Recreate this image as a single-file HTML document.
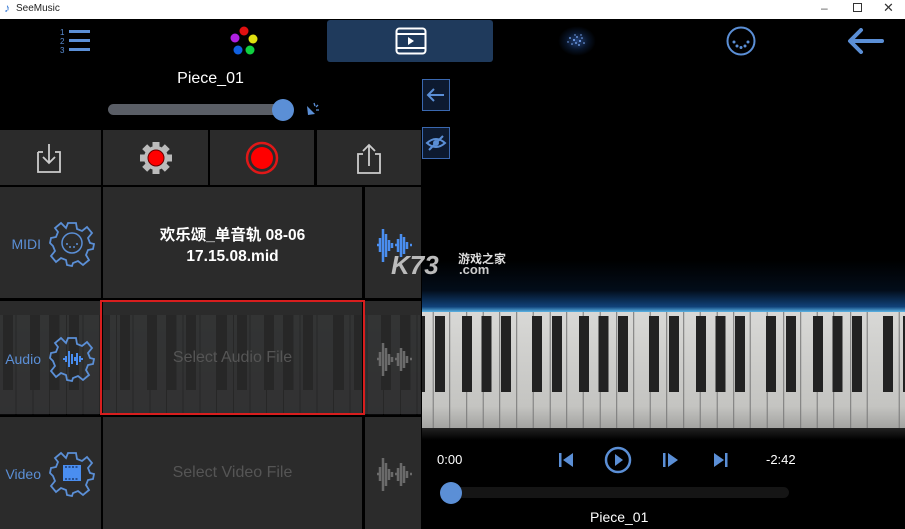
<!DOCTYPE html>
<html><head><meta charset="utf-8">
<style>
*{margin:0;padding:0;box-sizing:border-box}
body{width:905px;height:529px;overflow:hidden;background:#000;font-family:"Liberation Sans","Noto Sans CJK SC",sans-serif;position:relative}
.abs{position:absolute}
.cell{position:absolute;background:#2b2b2b}
.t{color:#fff;position:absolute;text-align:center}
.lbl{color:#5b8fd6;font-size:14px;position:absolute;text-align:right}
.keys{position:absolute;left:422px;top:312px;width:483px;height:118px;
background:
linear-gradient(to right,#222 0,#222 10px,transparent 10px,transparent 19.5px,#222 19.5px,#222 29.5px,transparent 29.5px,transparent 39px,#222 39px,#222 49px,transparent 49px,transparent 70px,#222 70px,#222 80px,transparent 80px,transparent 90px,#222 90px,#222 100px,transparent 100px) 40px 4px/117px 76px repeat-x,
repeating-linear-gradient(to right,transparent 0,transparent 15.7px,#777 15.7px,#777 16.7px) -21.8px 0/100% 100%,
linear-gradient(#d8d8d6,#c4c4c1 80%,#a0a09e);}
.fkeys{position:absolute;left:0;top:315px;width:421px;height:100px;opacity:.07;
background:
linear-gradient(to right,#000 0,#000 10px,transparent 10px,transparent 19.5px,#000 19.5px,#000 29.5px,transparent 29.5px,transparent 39px,#000 39px,#000 49px,transparent 49px,transparent 70px,#000 70px,#000 80px,transparent 80px,transparent 90px,#000 90px,#000 100px,transparent 100px) 30px 0/117px 75px repeat-x,
repeating-linear-gradient(to right,transparent 0,transparent 15.7px,#000 15.7px,#000 16.7px),
linear-gradient(#9aa,#889);}
</style></head><body>
<div class="abs" style="left:0;top:0;width:905px;height:19px;background:#fff"></div>
<div class="abs" style="left:4px;top:1px;font-size:12px;color:#3a7bd5">♪</div>
<div class="abs" style="left:16px;top:3px;font-size:10px;color:#222">SeeMusic</div>
<div class="abs" style="left:821px;top:1px;font-size:12px;color:#555">–</div>
<div class="abs" style="left:853px;top:3px;width:9px;height:9px;border:1px solid #333"></div>
<div class="abs" style="left:883px;top:0px;font-size:13px;color:#333">✕</div>

<div class="abs" style="left:327px;top:20px;width:166px;height:42px;background:#1f3a5c;border-radius:3px"></div>
<svg class="abs" style="left:60px;top:27px" width="32" height="28">
<text x="0" y="8" fill="#5b8fd6" font-size="8" font-family="Liberation Sans">1</text>
<text x="0" y="17" fill="#5b8fd6" font-size="8" font-family="Liberation Sans">2</text>
<text x="0" y="26" fill="#5b8fd6" font-size="8" font-family="Liberation Sans">3</text>
<rect x="9" y="3" width="21" height="3" fill="#5b8fd6"/><rect x="9" y="12" width="21" height="3" fill="#5b8fd6"/><rect x="9" y="21" width="21" height="3" fill="#5b8fd6"/></svg>
<svg class="abs" style="left:228px;top:26px" width="32" height="30">
<circle cx="16" cy="5" r="4.5" fill="#e01010"/><circle cx="7" cy="12" r="4.5" fill="#b020e0"/><circle cx="25" cy="13" r="4.5" fill="#e0e010"/><circle cx="10" cy="24" r="4.5" fill="#1060e0"/><circle cx="22" cy="24" r="4.5" fill="#10d040"/></svg>
<svg class="abs" style="left:395px;top:27px" width="32" height="28"><rect x="1.5" y="1.5" width="29" height="25" rx="3" fill="none" stroke="#fff" stroke-width="2"/><line x1="1" y1="7" x2="31" y2="7" stroke="#fff" stroke-width="2"/><line x1="1" y1="21" x2="31" y2="21" stroke="#fff" stroke-width="2"/><path d="M13 10 L19 14 L13 18Z" fill="#fff"/></svg>
<div class="abs" style="left:558px;top:26px;width:38px;height:30px;border-radius:50%;background:radial-gradient(rgba(60,110,200,.6) 0,rgba(20,50,100,.4) 40%,transparent 70%)"></div>
<svg class="abs" style="left:562px;top:30px" width="30" height="22" fill="#7fb0ff"><circle cx="8" cy="8" r=".9"/><circle cx="12" cy="10" r="1"/><circle cx="15" cy="7" r=".9"/><circle cx="18" cy="11" r="1"/><circle cx="14" cy="13" r=".9"/><circle cx="10" cy="14" r=".8"/><circle cx="20" cy="8" r=".8"/><circle cx="17" cy="15" r=".9"/><circle cx="22" cy="13" r=".8"/><circle cx="6" cy="12" r=".7"/><circle cx="13" cy="5" r=".7"/><circle cx="19" cy="5" r=".7"/></svg>
<svg class="abs" style="left:726px;top:26px" width="30" height="30"><circle cx="15" cy="15" r="13.5" fill="none" stroke="#5b8fd6" stroke-width="2"/><circle cx="8" cy="16" r="1.5" fill="#5b8fd6"/><circle cx="11" cy="20" r="1.5" fill="#5b8fd6"/><circle cx="15" cy="21.5" r="1.5" fill="#5b8fd6"/><circle cx="19" cy="20" r="1.5" fill="#5b8fd6"/><circle cx="22" cy="16" r="1.5" fill="#5b8fd6"/></svg>
<svg class="abs" style="left:846px;top:28px" width="38" height="26"><path d="M36 13 H5 M15 2 L4 13 L15 24" fill="none" stroke="#5b8fd6" stroke-width="4" stroke-linecap="round" stroke-linejoin="round"/></svg>

<div class="t" style="left:0;width:421px;top:70px;font-size:16px">Piece_01</div>
<div class="abs" style="left:108px;top:104px;width:185px;height:11px;border-radius:6px;background:#5a5e66"></div>
<div class="abs" style="left:272px;top:99px;width:22px;height:22px;border-radius:50%;background:#5b8fd6"></div>
<svg class="abs" style="left:304px;top:100px" width="18" height="18"><path d="M3 6 L11 14 L4 15 Z" fill="#5b8fd6"/><path d="M10 3 l1 3 M14 5 l-2 2 M15 10 l-3 0" stroke="#5b8fd6" stroke-width="1.3"/></svg>

<div class="cell" style="left:0;top:130px;width:101px;height:55px"></div>
<div class="cell" style="left:103px;top:130px;width:105px;height:55px"></div>
<div class="cell" style="left:210px;top:130px;width:104px;height:55px"></div>
<div class="cell" style="left:317px;top:130px;width:104px;height:55px"></div>
<svg class="abs" style="left:36px;top:142px" width="26" height="32"><path d="M2 10 H7 M19 10 H24 V30 H2 V10" fill="none" stroke="#ccc" stroke-width="1.8"/><path d="M13 2 V21 M7 15 L13 21 L19 15" fill="none" stroke="#ccc" stroke-width="1.8"/></svg>
<svg class="abs" style="left:139px;top:141px" width="34" height="34"><g fill="#bbb" transform="translate(17 17)"><circle r="12"/><rect x="-3.5" y="-16" width="7" height="32"/><rect x="-3.5" y="-16" width="7" height="32" transform="rotate(45)"/><rect x="-3.5" y="-16" width="7" height="32" transform="rotate(90)"/><rect x="-3.5" y="-16" width="7" height="32" transform="rotate(135)"/></g><circle cx="17" cy="17" r="8" fill="#f00" stroke="#600" stroke-width="1"/></svg>
<svg class="abs" style="left:245px;top:141px" width="34" height="34"><circle cx="17" cy="17" r="15" fill="none" stroke="#e01818" stroke-width="2.5"/><circle cx="17" cy="17" r="11" fill="#f00"/></svg>
<svg class="abs" style="left:356px;top:142px" width="26" height="32"><path d="M7 12 H2 V31 H24 V12 H19" fill="none" stroke="#ccc" stroke-width="1.8"/><path d="M13 24 V3 M7 9 L13 3 L19 9" fill="none" stroke="#ccc" stroke-width="1.8"/></svg>

<div class="cell" style="left:0;top:187px;width:101px;height:111px"></div>
<div class="cell" style="left:103px;top:187px;width:259px;height:111px"></div>
<div class="cell" style="left:365px;top:187px;width:56px;height:111px"></div>
<div class="cell" style="left:0;top:301px;width:101px;height:113px"></div>
<div class="cell" style="left:103px;top:301px;width:259px;height:113px"></div>
<div class="cell" style="left:365px;top:301px;width:56px;height:113px"></div>
<div class="cell" style="left:0;top:417px;width:101px;height:112px"></div>
<div class="cell" style="left:103px;top:417px;width:259px;height:112px"></div>
<div class="cell" style="left:365px;top:417px;width:56px;height:112px"></div>
<div class="fkeys"></div>
<div class="abs" style="left:100px;top:300px;width:265px;height:115px;border:2px solid #d81e1e"></div>

<div class="lbl" style="left:0;width:41px;top:236px">MIDI</div>
<div class="lbl" style="left:0;width:41px;top:351px">Audio</div>
<div class="lbl" style="left:0;width:41px;top:466px">Video</div>
<svg class="abs" style="left:49px;top:221px" width="46" height="46"><g transform="translate(23 23)" fill="none" stroke="#5b8fd6" stroke-width="1.8"><path d="M-4 -21 L4 -21 L5 -15 L10 -13 L15 -17 L20 -11 L16 -6 L18 -1 L22 0 L21 5 L16 6 L14 11 L17 16 L11 21 L6 17 L1 19 L0 22 L-5 21 L-6 16 L-11 14 L-16 18 L-21 12 L-17 7 L-19 2 L-22 -1 L-21 -6 L-16 -7 L-14 -12 L-17 -16 L-11 -21 L-6 -16Z"/></g></svg>
<svg class="abs" style="left:49px;top:336px" width="46" height="46"><g transform="translate(23 23)" fill="none" stroke="#5b8fd6" stroke-width="1.8"><path d="M-4 -21 L4 -21 L5 -15 L10 -13 L15 -17 L20 -11 L16 -6 L18 -1 L22 0 L21 5 L16 6 L14 11 L17 16 L11 21 L6 17 L1 19 L0 22 L-5 21 L-6 16 L-11 14 L-16 18 L-21 12 L-17 7 L-19 2 L-22 -1 L-21 -6 L-16 -7 L-14 -12 L-17 -16 L-11 -21 L-6 -16Z"/></g></svg>
<svg class="abs" style="left:49px;top:451px" width="46" height="46"><g transform="translate(23 23)" fill="none" stroke="#5b8fd6" stroke-width="1.8"><path d="M-4 -21 L4 -21 L5 -15 L10 -13 L15 -17 L20 -11 L16 -6 L18 -1 L22 0 L21 5 L16 6 L14 11 L17 16 L11 21 L6 17 L1 19 L0 22 L-5 21 L-6 16 L-11 14 L-16 18 L-21 12 L-17 7 L-19 2 L-22 -1 L-21 -6 L-16 -7 L-14 -12 L-17 -16 L-11 -21 L-6 -16Z"/></g></svg>
<svg class="abs" style="left:61px;top:232px" width="24" height="24"><circle cx="11" cy="11" r="10" fill="none" stroke="#5b8fd6" stroke-width="1.5"/><circle cx="6" cy="12" r="1" fill="#5b8fd6"/><circle cx="9" cy="15" r="1" fill="#5b8fd6"/><circle cx="13" cy="15" r="1" fill="#5b8fd6"/><circle cx="16" cy="12" r="1" fill="#5b8fd6"/></svg>
<svg class="abs" style="left:62px;top:348px" width="22" height="22"><path d="M1 11 H4 M4 8 V14 M7 3 V19 M10 6 V16 M13 9 V13 M15 5 V17 M18 8 V14 M21 11 H18" stroke="#4a8ef0" stroke-width="2"/></svg>
<svg class="abs" style="left:62px;top:464px" width="20" height="18"><rect x="1" y="1" width="18" height="16" fill="#4a8ef0"/><path d="M3 3 H17 M3 15 H17" stroke="#1a3a70" stroke-width="1.5" stroke-dasharray="2 1.5"/></svg>

<div class="t" style="left:103px;width:259px;top:225px;font-size:15.5px;line-height:21px;font-weight:bold">欢乐颂_单音轨 08-06<br>17.15.08.mid</div>
<div class="t" style="left:103px;width:259px;top:349px;font-size:16px;color:#555">Select Audio File</div>
<div class="t" style="left:103px;width:259px;top:464px;font-size:16px;color:#555">Select Video File</div>

<svg class="abs" style="left:375px;top:224px" width="38" height="42"><path d="M2 21 H4 M5 14 V28 M8 5 V38 M11 10 V33 M14 16 V27 M17 19 V24 M20 21 H22 M23 15 V28 M26 10 V33 M29 13 V30 M32 18 V25 M35 21 H37" stroke="#4a8ef0" stroke-width="2.5"/></svg>
<svg class="abs" style="left:375px;top:338px" width="38" height="42"><path d="M2 21 H4 M5 14 V28 M8 5 V38 M11 10 V33 M14 16 V27 M17 19 V24 M20 21 H22 M23 15 V28 M26 10 V33 M29 13 V30 M32 18 V25 M35 21 H37" stroke="#6a6a6a" stroke-width="2.5"/></svg>
<svg class="abs" style="left:375px;top:453px" width="38" height="42"><path d="M2 21 H4 M5 14 V28 M8 5 V38 M11 10 V33 M14 16 V27 M17 19 V24 M20 21 H22 M23 15 V28 M26 10 V33 M29 13 V30 M32 18 V25 M35 21 H37" stroke="#6a6a6a" stroke-width="2.5"/></svg>

<div class="abs" style="left:422px;top:260px;width:483px;height:55px;background:linear-gradient(transparent 0,rgba(10,50,100,.25) 55%,rgba(30,120,220,.55) 85%,#6fd0ff 97%,#aee8ff 100%)"></div>
<div class="keys"></div>
<div class="abs" style="left:422px;top:428px;width:483px;height:12px;background:linear-gradient(#222,#000)"></div>
<div class="abs" style="left:422px;top:79px;width:28px;height:32px;border:1.5px solid #3a68b0;background:#0d1a30"></div>
<svg class="abs" style="left:426px;top:86px" width="20" height="18"><path d="M18 9 H3 M8 3 L2 9 L8 15" fill="none" stroke="#5b8fd6" stroke-width="2"/></svg>
<div class="abs" style="left:422px;top:127px;width:28px;height:32px;border:1.5px solid #3a68b0;background:#0d1a30"></div>
<svg class="abs" style="left:425px;top:134px" width="22" height="18"><path d="M2 9 Q11 1 20 9 Q11 17 2 9Z" fill="none" stroke="#5b8fd6" stroke-width="2"/><circle cx="11" cy="9" r="3" fill="#5b8fd6"/><line x1="4" y1="16" x2="18" y2="2" stroke="#5b8fd6" stroke-width="2"/></svg>

<div class="abs" style="left:391px;top:250px;font-size:26px;font-weight:bold;color:#bbb;font-style:italic">K73</div>
<div class="abs" style="left:458px;top:250px;font-size:12px;color:#ddd;font-weight:bold">游戏之家</div>
<div class="abs" style="left:459px;top:262px;font-size:13px;color:#ccc;font-weight:bold">.com</div>

<div class="abs" style="left:437px;top:452px;font-size:13px;color:#fff">0:00</div>
<div class="abs" style="left:766px;top:452px;font-size:13px;color:#fff">-2:42</div>
<svg class="abs" style="left:558px;top:451px" width="18" height="18"><rect x="1" y="2" width="2.5" height="14" fill="#5b8fd6"/><path d="M15 2 V16 L5 9Z" fill="#5b8fd6"/></svg>
<svg class="abs" style="left:604px;top:446px" width="28" height="28"><circle cx="14" cy="14" r="12" fill="none" stroke="#5b8fd6" stroke-width="2.5"/><path d="M11 8 L19 14 L11 20Z" fill="#5b8fd6"/></svg>
<svg class="abs" style="left:662px;top:451px" width="18" height="18"><rect x="1" y="2" width="2.5" height="14" fill="#5b8fd6"/><path d="M6 2 V16 L16 9Z" fill="#5b8fd6"/></svg>
<svg class="abs" style="left:713px;top:451px" width="18" height="18"><path d="M1 2 V16 L11 9Z" fill="#5b8fd6"/><rect x="12" y="2" width="2.5" height="14" fill="#5b8fd6"/></svg>
<div class="abs" style="left:446px;top:487px;width:343px;height:11px;border-radius:6px;background:#151515"></div>
<div class="abs" style="left:440px;top:482px;width:22px;height:22px;border-radius:50%;background:#5b8fd6"></div>
<div class="abs" style="left:590px;top:509px;font-size:14px;color:#fff">Piece_01</div>
</body></html>
